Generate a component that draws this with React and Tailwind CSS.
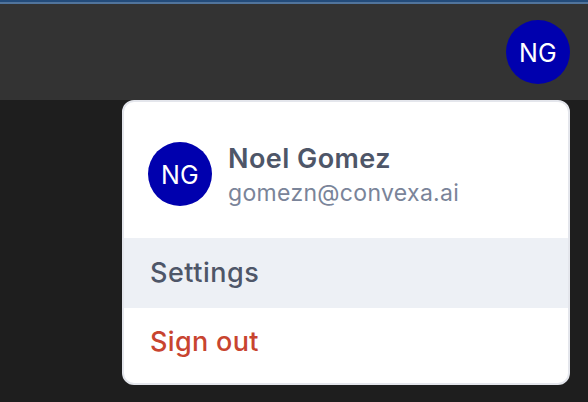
function Avatar() {
  return (
    <div className="flex size-16 shrink-0 items-center justify-center rounded-full bg-[#0000ae] pt-0.5 text-[25px] leading-8 font-normal tracking-[0.2px] text-white">
      <span>NG</span>
    </div>
  );
}

export default function App() {
  return (
    <div className="flex h-[402px] w-[588px] flex-col overflow-hidden bg-[#1e1e1e] font-[Inter,sans-serif]">
      <div className="h-0.5 shrink-0 bg-[#234b7a]" />
      <header className="flex h-[98px] shrink-0 justify-end border-t-2 border-[#51749c] bg-[#333333] pt-4 pr-[18px]">
        <Avatar />
      </header>
      <main className="flex justify-end pr-[18px]">
        <div className="flex h-[285px] w-[448px] flex-col rounded-[12px] border-2 border-[#e4e6ec] bg-white">
          <div className="flex h-[136px] shrink-0 items-center gap-4 pt-2 pl-6">
            <Avatar />
            <div className="flex flex-col pt-0.5">
              <span className="text-[27px] leading-9 font-semibold tracking-[0.45px] text-[#4e5668]">Noel Gomez</span>
              <span className="text-[23px] leading-8 tracking-[0.32px] text-[#7a8499]">gomezn@convexa.ai</span>
            </div>
          </div>
          <button className="flex h-[70px] shrink-0 items-center bg-[#edf0f5] pl-[26px] text-[27px] font-medium tracking-[0.5px] text-[#4e5668]">Settings</button>
          <button className="flex h-[68px] shrink-0 items-center pl-[26px] text-[27px] font-medium tracking-[0.32px] text-[#c8442f]">Sign out</button>
        </div>
      </main>
    </div>
  );
}
